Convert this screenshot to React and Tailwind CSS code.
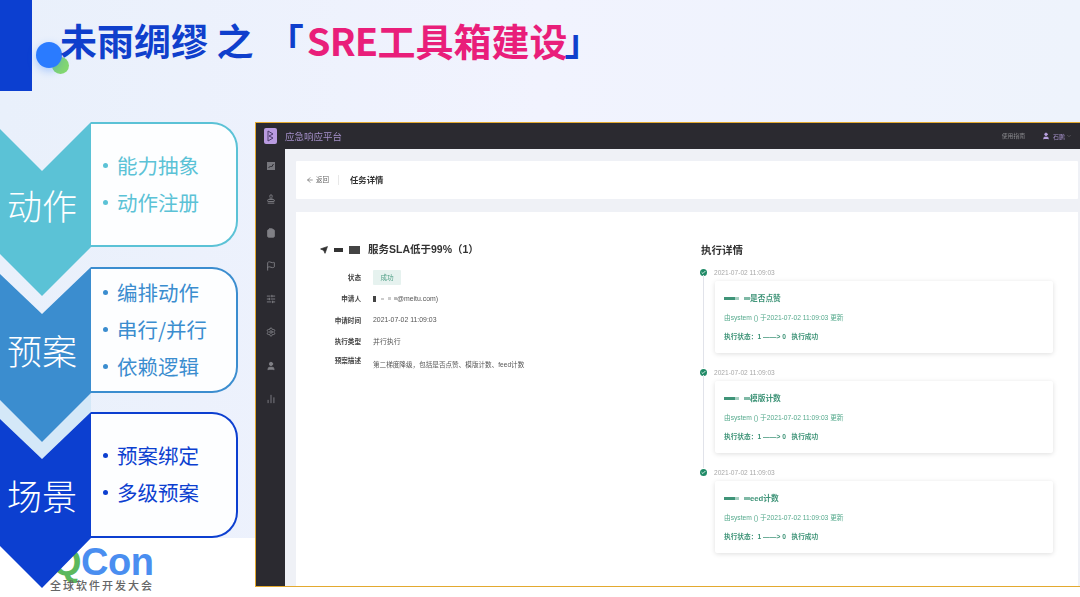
import React from "react";
import { Stamp, ClipboardList, Flag, SlidersHorizontal, Settings, User, ChartNoAxesColumn, ArrowLeft, Send, ChevronDown, Check } from "lucide-react";

const groups = [
  { title: "动作", items: ["能力抽象", "动作注册"], row: "h-[125px] mb-[20px]", chev: "h-[174px] -mb-[49px] bg-[#5bc2d6] [clip-path:polygon(91px_0,91px_125px,42px_174px,0_132px,0_7px,42px_49px)]", border: "border-[#5bc2d6]", text: "text-[#5bc2d6]", dot: "bg-[#5bc2d6]" },
  { title: "预案", items: ["编排动作", "串行/并行", "依赖逻辑"], row: "relative h-[126px] mb-[19px]", chev: "h-[175px] -mb-[49px] bg-[#3b8dcf] [clip-path:polygon(91px_0,91px_126px,42px_175px,0_133px,0_7px,42px_47px)]", border: "border-[#3b8dcf]", text: "text-[#3b8dcf]", dot: "bg-[#3b8dcf]", band: true },
  { title: "场景", items: ["预案绑定", "多级预案"], row: "h-[126px]", chev: "h-[176px] -mb-[50px] bg-[#0c3fd0] [clip-path:polygon(91px_0,91px_126px,42px_176px,0_134px,0_7px,42px_47px)]", border: "border-[#0c3fd0]", text: "text-[#0c3fd0]", dot: "bg-[#0c3fd0]" },
];

function SquareChart({ size }) {
  return (
    <svg width={size} height={size} viewBox="0 0 10 10">
      <rect x="1" y="1" width="8" height="8" fill="#77777d" />
      <path d="M2.5 7 L4.5 5 L5.5 6 L7.5 3" stroke="#2b2a30" strokeWidth="1" fill="none" />
    </svg>
  );
}

const sideIcons = [SquareChart, Stamp, ClipboardList, Flag, SlidersHorizontal, Settings, User, ChartNoAxesColumn];

const fields = [
  ["申请人", null],
  ["申请时间", "2021-07-02 11:09:03"],
  ["执行类型", "并行执行"],
];

const steps = [
  { name: "是否点赞" },
  { name: "模版计数" },
  { name: "eed计数" },
];

function Group({ g }) {
  return (
    <div className={`flex items-start ${g.row}`}>
      {g.band && (
        <div className="absolute left-0 top-0 w-[91px] h-[200px] bg-[#d4e8f8] [clip-path:polygon(91px_126px,91px_145px,42px_192px,0_152px,0_133px,42px_175px)]" />
      )}
      <div className={`relative z-10 w-[91px] flex-none pt-[65px] pr-[7px] text-center text-[35px] leading-[35px] font-light text-white ${g.chev}`}>
        {g.title}
      </div>
      <div className={`h-full w-[147px] flex-none flex flex-col justify-center pl-[12px] bg-[#fdfeff] border-2 border-l-0 rounded-r-[26px] ${g.border}`}>
        {g.items.map((t) => (
          <div key={t} className={`flex items-center h-[37px] -translate-y-px text-[20.5px] ${g.text}`}>
            <span className={`w-[5px] h-[5px] rounded-full flex-none mr-[9px] ${g.dot}`} />
            {t}
          </div>
        ))}
      </div>
    </div>
  );
}

function Step({ s, last }) {
  return (
    <div className="relative pl-[13px] h-[100px]">
      <div className="absolute -left-[1px] top-[0.5px] w-[7px] h-[7px] rounded-full bg-[#1f8a66] flex items-center justify-center">
        <Check size={5} strokeWidth={4} className="text-white" />
      </div>
      {!last && <div className="absolute left-[2px] top-[7px] w-px h-[93px] bg-[#e1e3ea]" />}
      <div className="h-[9px] text-[6.6px] leading-[9px] text-[#a8a8a8]">2021-07-02 11:09:03</div>
      <div className="mt-[4px] ml-px w-[338px] h-[72px] bg-white rounded-[2px] shadow-[0_1px_5px_rgba(0,0,0,0.13)] pl-[9px] pt-[11px] text-[#3f9478]">
        <div className="flex items-center h-[13px] text-[7.7px] font-semibold leading-[13px]">
          <span className="w-[11px] h-[3px] bg-[#3f9478]" />
          <span className="w-[4px] h-[3px] bg-[#a5cfc1]" />
          <span className="w-[5px]" />
          <span className="w-[6px] h-[3px] bg-[#7fb9a6]" />
          {s.name}
        </div>
        <div className="mt-[6px] text-[6.7px] leading-[13px] text-[#54a98c]">由system () 于2021-07-02 11:09:03 更新</div>
        <div className="mt-[6px] text-[6.7px] leading-[13px] font-semibold">执行状态：1 ——&gt; 0&nbsp;&nbsp;&nbsp;执行成功</div>
      </div>
    </div>
  );
}

export default function App() {
  return (
    <div className="w-[1080px] h-[597px] overflow-hidden flex flex-col bg-white font-['Noto_Sans_CJK_SC','Noto_Sans',sans-serif]">
      <div className="h-[538px] flex-none bg-gradient-to-r from-[#e9f0fb] via-[#f1f3fe] to-[#eef3fc]">
        <header className="relative h-[122px] flex items-start">
          <div className="w-[32px] h-[91px] bg-[#0c3fd0] flex-none" />
          <div className="absolute left-[52px] top-[57px] w-[17px] h-[17px] rounded-full bg-[#84d86f]" />
          <div className="absolute left-[36px] top-[42px] w-[26px] h-[26px] rounded-full bg-[#2a7bff] shadow-[0_3px_8px_rgba(42,123,255,0.35)]" />
          <h1 className="relative ml-[28px] mt-[15px] flex text-[37px] leading-[50px] font-bold text-[#0f3fcc] whitespace-pre">
            未雨绸缪 之 <span className="ml-[5px]">「</span><span className="text-[#e91e7a] text-[38px] ml-[3px]"><span className="tracking-[-0.8px]">SRE</span>工具箱建设</span><span className="-ml-[3px]">」</span>
          </h1>
        </header>
        <div className="flex h-[416px]">
          <div className="w-[255px] flex-none flex flex-col">
            {groups.map((g) => <Group key={g.title} g={g} />)}
          </div>
          <div className="relative z-20 w-[825px] h-[465px] flex-none flex flex-col border-t border-l border-b border-[#e3a92f] bg-[#2b2a30]">
            <div className="h-[26px] flex-none flex items-center blur-[0.4px]">
              <div className="ml-[8px] w-[13px] h-[16px] rounded-[2px] bg-[#b99be0] flex items-center justify-center">
                <svg width="7" height="12" viewBox="0 0 7 12">
                  <path d="M1 1 L6 4 L2 6 L6 8 L1 11 Z" fill="none" stroke="#4c3d6c" strokeWidth="1" />
                </svg>
              </div>
              <span className="ml-[8px] text-[9.5px] text-[#a48fc8]">应急响应平台</span>
              <span className="ml-auto text-[5.8px] text-[#8a8a8e]">使用指南</span>
              <User size={8} className="ml-[17px] text-[#b9a2e0] fill-[#b9a2e0]" />
              <span className="ml-[3px] text-[6px] text-[#a48fc8]">石鹏</span>
              <ChevronDown size={6} className="ml-[1px] mr-[8px] text-[#77777d]" />
            </div>
            <div className="flex-1 flex min-h-0">
              <div className="w-[29px] flex-none flex flex-col items-center pt-[12px] gap-[23.3px] blur-[0.3px]">
                {sideIcons.map((Icon, i) => (
                  <Icon key={i} size={10} strokeWidth={2.2} className={`text-[#808086] ${i === 6 || i === 2 || i === 7 ? "fill-[#808086]" : ""}`} />
                ))}
              </div>
              <div className="flex-1 bg-[#eff1f6] pl-[11px] pr-[2px] pt-[12px] flex flex-col gap-[13px] min-h-0 blur-[0.3px]">
                <div className="h-[38px] flex-none bg-white flex items-center rounded-[1px] font-['Liberation_Sans','Noto_Sans_CJK_SC',sans-serif]">
                  <ArrowLeft size={8} className="ml-[10px] text-[#666]" />
                  <span className="ml-[2px] text-[6.5px] text-[#666]">返回</span>
                  <span className="ml-[9px] w-px h-[10px] bg-[#e8e8e8]" />
                  <span className="ml-[11px] text-[8.4px] font-semibold text-[#333]">任务详情</span>
                </div>
                <div className="flex-1 bg-white flex min-h-0 font-['Liberation_Sans','Noto_Sans_CJK_SC',sans-serif]">
                  <div className="w-[405px] flex-none pl-[24px] pt-[29px]">
                    <div className="flex items-center h-[18px] text-[#333]">
                      <Send size={8} className="text-[#333] fill-[#333]" />
                      <span className="ml-[6px] w-[9px] h-[4px] bg-[#333]" />
                      <span className="ml-[6px] w-[11px] h-[8px] bg-[#444]" />
                      <span className="ml-[8px] text-[10.5px] font-semibold whitespace-nowrap">服务SLA低于99%（1）</span>
                    </div>
                    <div className="mt-[11px] flex items-center h-[15px] text-[6.6px]">
                      <span className="w-[41px] text-right font-semibold text-[#444]">状态</span>
                      <span className="ml-[12px] w-[28px] h-[15px] rounded-[1px] bg-[#e6f2ef] text-[#4f9f86] text-center leading-[15px]">成功</span>
                    </div>
                    {fields.map(([k, v]) => (
                      <div key={k} className="mt-[6.5px] flex items-center h-[15px] text-[6.6px]">
                        <span className="w-[41px] text-right font-semibold text-[#444]">{k}</span>
                        <span className="ml-[12px] flex items-center text-[#555] text-[6.9px]">
                          {v === null ? (
                            <>
                              <span className="w-[3px] h-[6px] bg-[#444]" />
                              <span className="ml-[5px] w-[3px] h-[2px] bg-[#ccc]" />
                              <span className="ml-[4px] w-[3px] h-[3px] bg-[#ccc]" />
                              <span className="ml-[3px] w-[3px] h-[3px] bg-[#bbb]" />
                              @meitu.com)
                            </>
                          ) : v}
                        </span>
                      </div>
                    ))}
                    <div className="mt-[6.5px] flex items-start h-[15px] text-[6.6px]">
                      <span className="w-[41px] text-right font-semibold text-[#444]">预案描述</span>
                      <span className="ml-[12px] mt-[4px] text-[#555] whitespace-nowrap">第二梯度降级，包括是否点赞、模版计数、feed计数</span>
                    </div>
                  </div>
                  <div className="flex-1 pt-[29px]">
                    <div className="h-[18px] text-[10.5px] leading-[18px] font-semibold text-[#333]">执行详情</div>
                    <div className="mt-[9px]">
                      {steps.map((s, i) => <Step key={s.name} s={s} last={i === 2} />)}
                    </div>
                  </div>
                </div>
              </div>
            </div>
          </div>
        </div>
      </div>
      <footer className="flex-1 pt-[9px] pl-[50px]">
        <div className="h-[31px] pl-[2px] text-[38px] leading-[31px] font-bold tracking-[-0.5px] font-['Liberation_Sans',sans-serif] text-[#4a8ef0]">
          <span className="text-[#5cb85c]">Q</span>Con
        </div>
        <div className="text-[11px] leading-[14px] tracking-[2px] font-medium text-[#666]">全球软件开发大会</div>
      </footer>
    </div>
  );
}
